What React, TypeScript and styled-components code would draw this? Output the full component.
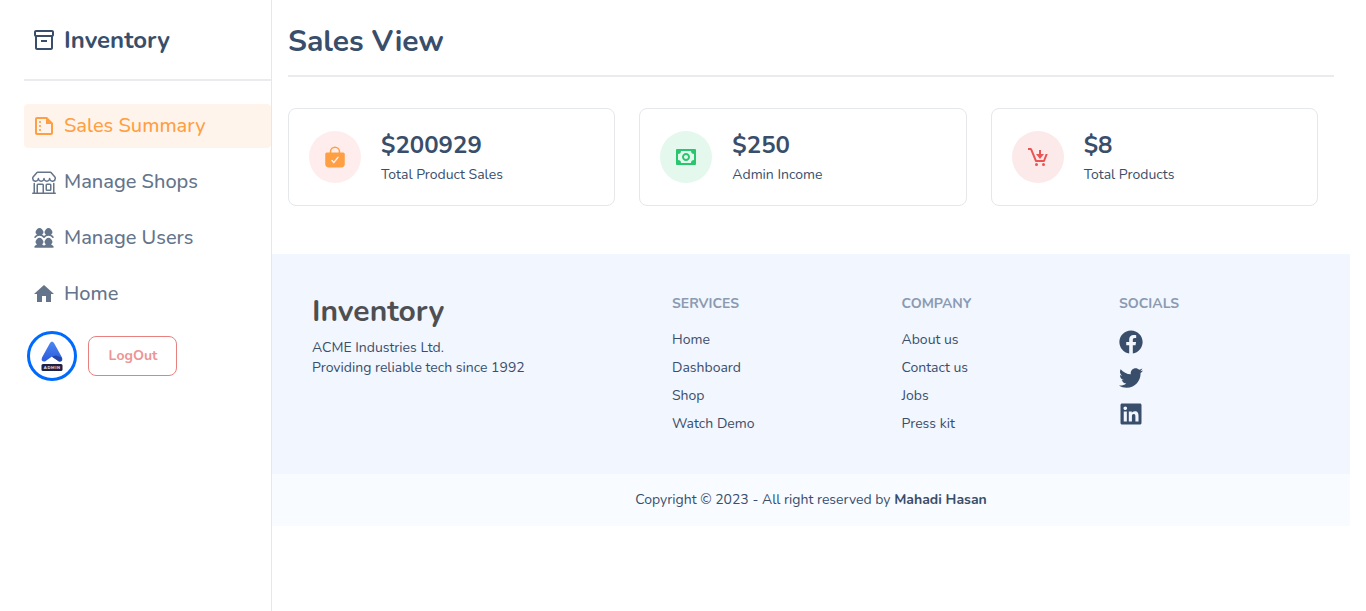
import React from 'react';
import styled, { createGlobalStyle } from 'styled-components';
import { MdOutlineInventory2, MdOutlineSummarize, MdHome } from 'react-icons/md';
import { BsShop } from 'react-icons/bs';
import { PiUsersFourFill } from 'react-icons/pi';
import { IoBagCheck } from 'react-icons/io5';
import { BiMoney, BiCartDownload } from 'react-icons/bi';
import { FaFacebook, FaTwitter, FaLinkedin } from 'react-icons/fa';

const GlobalStyle = createGlobalStyle`
  *, *::before, *::after { box-sizing: border-box; }
  body { margin: 0; background: #fff; color: #394e6a; font-family: Nunito, Lato, sans-serif; font-size: 14px; line-height: 20px; }
  h1, h2, h3, p, ul { margin: 0; padding: 0; }
  ul { list-style: none; }
`;

const Page = styled.div`
  display: flex;
  height: 611px;
  overflow: hidden;
`;

const Sidebar = styled.aside`
  flex: 0 0 272px;
  border-right: 1px solid #e5e7eb;
  padding-left: 24px;
`;

const Brand = styled.div`
  display: flex;
  align-items: center;
  gap: 8px;
  height: 81px;
  padding-left: 8px;
  border-bottom: 2px solid #ebebef;
  font-size: 24px;
  font-weight: 700;
`;

const Nav = styled.nav`
  display: flex;
  flex-direction: column;
  gap: 12px;
  margin-top: 23px;
`;

const NavItem = styled.a<{ $active?: boolean }>`
  display: flex;
  align-items: center;
  gap: 8px;
  height: 44px;
  padding-left: 8px;
  border-radius: 4px;
  font-size: 20px;
  font-weight: 500;
  color: ${p => (p.$active ? '#ff9f43' : '#64748b')};
  background: ${p => (p.$active ? '#fff4eb' : 'transparent')};
`;

const Account = styled.div`
  display: flex;
  align-items: center;
  gap: 11px;
  margin: 15px 0 0 3px;
`;

const Avatar = styled.div`
  width: 50px;
  height: 50px;
  border: 3px solid #006aff;
  border-radius: 50%;
  overflow: hidden;
`;

const Logout = styled.button`
  width: 89px;
  height: 40px;
  padding: 0 0 2px 1px;
  border: 1px solid #e88080;
  border-radius: 8px;
  background: #fff;
  color: #ed9494;
  font: 700 14px Nunito, Lato, sans-serif;
`;

const Main = styled.main`
  width: 1078px;
`;

const Title = styled.h1`
  height: 77px;
  margin: 0 16px;
  padding-top: 24px;
  border-bottom: 2px solid #ebebef;
  font-size: 30px;
  font-weight: 700;
  line-height: 36px;
`;

const Cards = styled.section`
  display: grid;
  grid-template-columns: repeat(3, 1fr);
  gap: 24px;
  padding: 31px 32px 48px 16px;
`;

const Card = styled.article`
  display: flex;
  align-items: center;
  gap: 20px;
  height: 98px;
  padding: 0 20px;
  border: 1px solid #e5e7eb;
  border-radius: 8px;
`;

const Disc = styled.div<{ $bg: string; $fg: string }>`
  display: flex;
  align-items: center;
  justify-content: center;
  width: 52px;
  height: 52px;
  border-radius: 50%;
  background: ${p => p.$bg};
  color: ${p => p.$fg};
`;

const Amount = styled.h2`
  margin-bottom: 4px;
  font-size: 24px;
  font-weight: 700;
  line-height: 32px;
`;

const Footer = styled.footer`
  display: grid;
  grid-template-columns: 360px 229.5px 217.5px 1fr;
  height: 220px;
  padding: 40px;
  background: #f1f6ff;
`;

const FooterBrand = styled.h2`
  margin-bottom: 8px;
  font-size: 30px;
  line-height: 36px;
  color: #4f4f52;
`;

const ColumnTitle = styled.h3`
  margin-bottom: 16px;
  font-size: 14px;
  line-height: 20px;
  color: #8b9ab1;
`;

const Links = styled.ul`
  display: flex;
  flex-direction: column;
  gap: 8px;
`;

const Socials = styled.div`
  display: flex;
  flex-direction: column;
  gap: 12px;
`;

const Copyright = styled.div`
  height: 52px;
  padding-top: 16px;
  background: #f8fbff;
  text-align: center;
`;

const Logo = () => (
  <svg width="44" height="44" viewBox="0 0 44 44">
    <defs>
      <linearGradient id="mark" x1="0" y1="0" x2="0" y2="1">
        <stop offset="0" stopColor="#4c86f5" />
        <stop offset="1" stopColor="#2c5bd8" />
      </linearGradient>
    </defs>
    <path d="M20 9Q22 6 24 9L32 23.500Q33.500 28 29 27.500L22 22.500L15 27.500Q10.500 28 12 23.500Z" fill="url(#mark)" />
    <path d="M21.500 22.500L26 21.500L31.500 23.500Q33 28 29 27.500Z" fill="#2546a8" />
    <rect x="11.500" y="30" width="21" height="7" rx="1.500" fill="#1d2142" />
    <text x="22.200" y="34.900" fontSize="4" fontWeight="800" textAnchor="middle" fill="#e6e6f0" letterSpacing=".6">ADMIN</text>
  </svg>
);

const navItems = [
  { label: 'Sales Summary', Icon: MdOutlineSummarize, active: true },
  { label: 'Manage Shops', Icon: BsShop },
  { label: 'Manage Users', Icon: PiUsersFourFill },
  { label: 'Home', Icon: MdHome },
];

const cards = [
  { amount: '$200929', label: 'Total Product Sales', Icon: IoBagCheck, bg: '#ffeded', fg: '#ff9f43' },
  { amount: '$250', label: 'Admin Income', Icon: BiMoney, bg: '#e4f8ed', fg: '#28c76f' },
  { amount: '$8', label: 'Total Products', Icon: BiCartDownload, bg: '#fceaea', fg: '#ea5455' },
];

const columns = [
  { title: 'SERVICES', links: ['Home', 'Dashboard', 'Shop', 'Watch Demo'] },
  { title: 'COMPANY', links: ['About us', 'Contact us', 'Jobs', 'Press kit'] },
];

export default function App() {
  return (
    <>
      <GlobalStyle />
      <Page>
        <Sidebar>
          <Brand><MdOutlineInventory2 size={24} />Inventory</Brand>
          <Nav>
            {navItems.map(({ label, Icon, active }) => (
              <NavItem key={label} $active={active}><Icon size={24} />{label}</NavItem>
            ))}
          </Nav>
          <Account>
            <Avatar><Logo /></Avatar>
            <Logout>LogOut</Logout>
          </Account>
        </Sidebar>
        <Main>
          <Title>Sales View</Title>
          <Cards>
            {cards.map(({ amount, label, Icon, bg, fg }) => (
              <Card key={label}>
                <Disc $bg={bg} $fg={fg}><Icon size={24} /></Disc>
                <div>
                  <Amount>{amount}</Amount>
                  <p>{label}</p>
                </div>
              </Card>
            ))}
          </Cards>
          <Footer>
            <div>
              <FooterBrand>Inventory</FooterBrand>
              <p>ACME Industries Ltd.<br />Providing reliable tech since 1992</p>
            </div>
            {columns.map(({ title, links }) => (
              <div key={title}>
                <ColumnTitle>{title}</ColumnTitle>
                <Links>{links.map(link => <li key={link}>{link}</li>)}</Links>
              </div>
            ))}
            <div>
              <ColumnTitle>SOCIALS</ColumnTitle>
              <Socials>
                <FaFacebook size={24} />
                <FaTwitter size={24} />
                <FaLinkedin size={24} />
              </Socials>
            </div>
          </Footer>
          <Copyright>Copyright © 2023 - All right reserved by <b>Mahadi Hasan</b></Copyright>
        </Main>
      </Page>
    </>
  );
}
